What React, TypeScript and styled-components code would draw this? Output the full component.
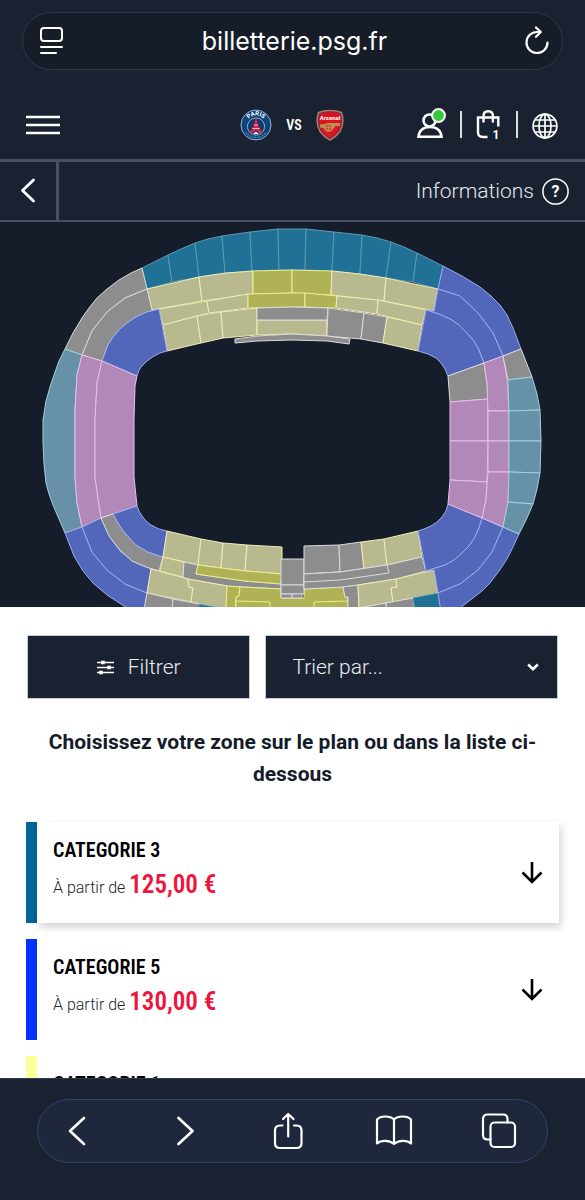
import React from "react";
import styled, { createGlobalStyle } from "styled-components";

const GlobalStyle = createGlobalStyle`
  *, *::before, *::after { box-sizing: border-box; }
  body {
    margin: 0;
    background: #1a2232;
    font-family: Roboto, "Liberation Sans", sans-serif;
  }
  h1, h2, p, ul { margin: 0; padding: 0; }
  button, select { font-family: inherit; }
`;

const navy = "#1a2232";
const rule = "#49505f";
const condensed = `"Roboto Condensed", Roboto, sans-serif`;

const Screen = styled.div`
  display: flex;
  flex-direction: column;
  height: 100vh;
  overflow: hidden;
  background: ${navy};
`;

const AddressArea = styled.header`
  flex: none;
  padding: 12px 22px 20px;
`;

const AddressBar = styled.div`
  display: flex;
  align-items: center;
  justify-content: space-between;
  height: 58px;
  padding: 0 12px 0 16px;
  border: 1px solid #2c384c;
  border-radius: 29px;
  background: #161c28;
`;

const AddressText = styled.span`
  color: #fff;
  font-family: Inter, "Liberation Sans", sans-serif;
  font-size: 25px;
  line-height: 30px;
`;

const IconButton = styled.button`
  display: flex;
  flex: none;
  align-items: center;
  justify-content: center;
  padding: 0;
  border: 0;
  background: none;
  color: #fff;
  cursor: pointer;

  svg { display: block; }
`;

const SiteNav = styled.nav`
  display: grid;
  flex: none;
  grid-template-columns: 1fr auto 1fr;
  align-items: center;
  height: 69px;
  padding: 0 27px 0 26px;
`;

const MenuSlot = styled.div`
  display: flex;
`;

const Match = styled.div`
  display: flex;
  align-items: center;
  gap: 14px;
  color: #fff;

  svg { display: block; }
`;

const Versus = styled.span`
  font-family: ${condensed};
  font-size: 14px;
  font-weight: 600;
  line-height: 16px;
`;

const Tools = styled.div`
  display: flex;
  align-items: center;
  justify-content: flex-end;
  gap: 14px;
`;

const Separator = styled.span`
  width: 2px;
  height: 27px;
  background: #d9dce2;
`;

const SubBar = styled.div`
  display: flex;
  flex: none;
  align-items: stretch;
  justify-content: space-between;
  height: 63px;
  border-top: 3px solid ${rule};
  border-bottom: 2px solid ${rule};
`;

const BackButton = styled(IconButton)`
  width: 59px;
  border-right: 3px solid ${rule};
`;

const InfoLink = styled.a`
  display: flex;
  align-items: center;
  gap: 8px;
  padding-right: 16px;
  color: #e3e6ec;
  font-size: 21px;
  font-weight: 300;
  line-height: 28px;
  text-decoration: none;
`;

const Content = styled.main`
  flex: 1;
  min-height: 0;
  overflow: hidden;
  background: #fff;
`;

const StadiumMap = styled.svg`
  display: block;
  width: 100%;
  background: #151d2b;
`;

const Controls = styled.div`
  display: grid;
  grid-template-columns: 223fr 292fr;
  gap: 15px;
  padding: 28px 27px 0;
`;

const FilterButton = styled.button`
  display: flex;
  align-items: center;
  justify-content: center;
  gap: 14px;
  height: 64px;
  border: 1px solid #c9cbdd;
  background: ${navy};
  color: #e9ebf0;
  font-size: 21px;
  font-weight: 300;
  cursor: pointer;
`;

const SortBox = styled.div`
  position: relative;
  height: 64px;
  border: 1px solid #c9cbdd;
  background: ${navy};

  svg {
    position: absolute;
    top: 27px;
    right: 18px;
    pointer-events: none;
  }
`;

const SortSelect = styled.select`
  width: 100%;
  height: 100%;
  padding: 0 26px;
  border: 0;
  appearance: none;
  background: transparent;
  color: #e9ebf0;
  font-size: 21px;
  font-weight: 300;
`;

const Prompt = styled.h1`
  padding: 27px 27px 32px;
  color: #141c2a;
  font-size: 21px;
  font-weight: 700;
  line-height: 32px;
  text-align: center;
`;

const CategoryList = styled.ul`
  display: flex;
  flex-direction: column;
  gap: 16px;
  padding: 0 26px;
  list-style: none;
`;

const CategoryCard = styled.li<{ $color: string }>`
  display: flex;
  height: 101px;
  border-left: 11px solid ${(p) => p.$color};
`;

const CardButton = styled.button<{ $raised?: boolean }>`
  display: flex;
  flex: 1;
  align-items: center;
  justify-content: space-between;
  padding: 0 16px;
  border: 0;
  background: #fff;
  box-shadow: ${(p) => (p.$raised ? "2px 4px 8px rgba(0, 0, 0, 0.18)" : "none")};
  color: #000;
  text-align: left;
  cursor: pointer;
`;

const CardText = styled.span`
  display: flex;
  flex-direction: column;
  height: 72px;
`;

const CategoryName = styled.span`
  font-family: ${condensed};
  font-size: 20px;
  font-weight: 600;
  line-height: 26px;
`;

const PriceLine = styled.span`
  color: #20242c;
  font-size: 16px;
  font-weight: 300;
  line-height: 44px;
`;

const Price = styled.strong`
  color: #f0143c;
  font-family: ${condensed};
  font-size: 25px;
  font-weight: 600;
`;

const BrowserFooter = styled.footer`
  flex: none;
  padding: 20px 37px 37px;
  border-top: 1px solid #333b4c;
`;

const BrowserTools = styled.div`
  display: flex;
  align-items: center;
  justify-content: space-between;
  height: 64px;
  padding: 0 26px 0 17px;
  border: 1px solid #304468;
  border-radius: 32px;
  background: #1e273b;
`;

const ToolButton = styled(IconButton)`
  width: 44px;
  height: 44px;
`;

const tones = {
  teal: { fill: "#217096", stroke: "#5c9ab5" },
  haze: { fill: "#6791a6", stroke: "#a3cfe0" },
  sand: { fill: "#b9b990", stroke: "#f0f0b4" },
  lime: { fill: "#b0b355", stroke: "#eef08c" },
  grey: { fill: "#8d8d8d", stroke: "#dcdcdc" },
  blue: { fill: "#5367ba", stroke: "#9dacee" },
  pink: { fill: "#b288b8", stroke: "#e8bfee" },
};

type Tone = keyof typeof tones;

const sections: [Tone, string][] = [
  ["teal", "142 268 168 255 172 282 147 289"],
  ["teal", "168 255 181 249 195 243 199 277 172 282"],
  ["teal", "195 243 208 239 222 236 225 273 199 277"],
  ["teal", "222 236 250 232 252 271 225 273"],
  ["teal", "250 232 278 229 279 270 252 271"],
  ["teal", "278 229 292 229 306 229 305 270 279 270"],
  ["teal", "306 229 334 232 332 271 305 270"],
  ["teal", "334 232 362 235 360 274 332 271"],
  ["teal", "362 235 377 238 391 242 386 278 360 274"],
  ["teal", "391 242 404 247 417 253 413 282 386 278"],
  ["teal", "417 253 443 266 438 289 413 282"],
  ["sand", "147 289 199 277 202 301 152 310"],
  ["sand", "199 277 226 273 253 271 253 294 202 301"],
  ["lime", "253 271 292 270 292 293 253 294"],
  ["lime", "292 270 332 271 331 295 292 293"],
  ["sand", "332 271 360 274 386 278 384 301 331 295"],
  ["sand", "386 278 438 289 434 311 384 301"],
  ["sand", "159 309 207 301 209 313 163 325"],
  ["sand", "207 301 248 294 248 308 209 313"],
  ["lime", "248 294 292 293 305 293 305 307 248 308"],
  ["lime", "305 293 337 296 336 308 305 307"],
  ["sand", "337 296 378 300 377 314 336 308"],
  ["sand", "378 300 426 310 422 325 377 314"],
  ["sand", "163 325 197 316 201 343 167 351"],
  ["sand", "197 316 221 312 223 338 201 343"],
  ["sand", "221 312 257 308 257 335 223 338"],
  ["sand", "257 320 327 320 327 336 292 334 257 335"],
  ["grey", "257 308 292 307 328 308 327 320 257 320"],
  ["grey", "328 308 364 313 361 339 327 336"],
  ["grey", "364 313 387 317 383 343 361 339"],
  ["sand", "387 317 422 325 418 351 383 343"],
  ["grey", "235 339 257 336 292 334 327 336 350 339 349 344 327 341 292 340 257 341 235 343"],
  ["grey", "142 268 131 273 119 280 107 289 97 298 89 308 82 318 73 333 65 349 82 355 92 331 107 312 125 298 147 289"],
  ["grey", "147 289 152 310 159 309 147 312 136 317 127 323 120 329 113 337 108 345 102 361 82 355 92 331 107 312 125 298"],
  ["blue", "159 309 167 351 160 353 154 356 147 361 142 366 139 370 137 376 102 361 108 345 113 337 120 329 127 323 136 317 147 312"],
  ["haze", "65 349 59 361 54 375 50 387 46 401 43 420 43 443 44 464 46 483 49 494 53 505 65 533 82 527 77 503 75 477 75 410 77 375 82 355"],
  ["pink", "82 355 102 361 97 383 95 420 95 477 98 498 101 518 82 527 77 503 75 477 75 410 77 375"],
  ["pink", "102 361 137 376 135 386 134 420 134 477 137 506 101 518 98 498 95 477 95 420 97 383"],
  ["blue", "65 533 82 527 92 552 107 570 125 584 147 593 144 612 132 612 121 604 107 595 93 583 83 571 74 556"],
  ["blue", "82 527 101 518 110 537 121 552 134 562 151 569 147 593 125 584 107 570 92 552"],
  ["grey", "101 518 113 514 118 523 124 532 136 545 148 552 163 557 159 571 146 567 132 561 119 549 109 536"],
  ["blue", "113 514 137 506 139 511 142 516 146 521 151 525 159 529 167 531 163 557 148 552 136 545 124 532 118 523"],
  ["sand", "167 531 201 539 198 565 163 557"],
  ["sand", "201 539 223 543 221 568 198 565"],
  ["sand", "223 543 247 545 245 571 221 568"],
  ["sand", "247 545 282 547 282 574 245 571"],
  ["sand", "163 557 184 562 183 577 160 571"],
  ["grey", "184 562 198 565 196 574 245 581 281 584 281 589 227 586 188 579 183 577"],
  ["lime", "198 565 245 571 282 574 281 584 245 581 196 574"],
  ["sand", "151 569 188 579 189 587 193 588 191 602 147 593"],
  ["sand", "188 579 227 586 226 610 191 602 193 588 189 587"],
  ["grey", "147 593 173 599 172 610 144 610"],
  ["grey", "173 599 226 609 226 612 172 610"],
  ["teal", "199 604 220 608 199 612"],
  ["lime", "227 586 240 587 239 596 236 597 236 610 226 610"],
  ["lime", "240 587 281 589 281 598 304 598 304 589 343 587 345 597 348 597 348 610 236 610 236 597 239 596"],
  ["lime", "236 601 270 602 270 610 236 610"],
  ["lime", "314 602 348 601 348 610 314 610"],
  ["grey", "281 559 304 559 304 585 281 585"],
  ["grey", "281 585 304 585 304 594 281 594"],
  ["grey", "281 594 292 594 292 598 281 598"],
  ["grey", "292 594 302 594 302 598 292 598"],
  ["grey", "304 546 339 545 340 572 304 574"],
  ["grey", "339 545 361 542 364 569 340 572"],
  ["sand", "361 542 384 539 387 565 364 569"],
  ["sand", "384 539 418 531 422 557 387 565"],
  ["grey", "304 574 340 572 387 565 422 557 426 571 396 579 358 585 343 587 304 589"],
  ["grey", "304 574 340 572 387 565 389 573 340 580 304 582"],
  ["grey", "343 587 358 585 359 610 348 610 348 597 345 597"],
  ["sand", "358 585 396 579 397 587 391 588 393 602 359 608"],
  ["sand", "396 579 434 570 438 593 393 602 391 588 397 587"],
  ["grey", "359 608 386 603 387 612 359 612"],
  ["grey", "386 603 413 598 415 610 387 612"],
  ["teal", "413 598 438 593 441 610 415 610"],
  ["blue", "418 531 424 529 431 526 437 522 442 517 446 511 448 504 482 518 479 528 475 537 469 546 462 553 454 560 445 565 426 571"],
  ["blue", "482 518 503 527 492 552 478 570 460 584 438 593 434 570 426 571 445 565 454 560 462 553 469 546 475 537 479 528"],
  ["blue", "503 527 519 534 513 547 507 559 499 571 490 583 482 591 473 598 455 612 441 612 438 593 460 584 478 570 492 552"],
  ["blue", "443 266 462 276 480 287 491 296 500 305 507 315 513 328 521 349 503 356 493 333 478 313 460 296 438 289"],
  ["blue", "438 289 460 296 478 313 493 333 503 356 484 363 478 348 473 340 466 332 459 325 450 319 439 314 426 310 434 311"],
  ["blue", "426 310 439 314 450 319 459 325 466 332 473 340 478 348 484 363 448 376 445 369 441 363 436 358 428 354 418 351"],
  ["grey", "448 376 484 363 487 383 488 399 450 402"],
  ["pink", "450 402 488 399 488 441 450 441"],
  ["pink", "450 441 488 441 487 482 450 480"],
  ["pink", "450 480 487 482 486 500 482 518 448 504"],
  ["pink", "484 363 503 356 507 378 509 411 488 411 487 383"],
  ["pink", "488 411 509 411 509 441 488 441"],
  ["pink", "488 441 509 441 509 472 488 472"],
  ["pink", "488 472 509 472 508 502 503 527 482 518 486 500"],
  ["grey", "503 356 521 349 532 377 508 380"],
  ["haze", "508 380 532 377 537 394 540 410 509 411"],
  ["haze", "509 411 540 410 541 441 509 441"],
  ["haze", "509 441 541 441 540 473 509 472"],
  ["haze", "509 472 540 473 537 489 533 504 508 502"],
  ["haze", "508 502 533 504 527 518 519 534 503 527"],
];

const categories: { name: string; price: string; color: string; raised?: boolean }[] = [
  { name: "CATEGORIE 3", price: "125,00 €", color: "#006699", raised: true },
  { name: "CATEGORIE 5", price: "130,00 €", color: "#0033ff" },
  { name: "CATEGORIE 1", price: "150,00 €", color: "#ffff99" },
];

const strokeProps = {
  fill: "none",
  stroke: "#fff",
  strokeLinecap: "round" as const,
  strokeLinejoin: "round" as const,
};

const ReaderIcon = () => (
  <svg width="26" height="30" viewBox="0 0 26 30" {...strokeProps} strokeWidth="2">
    <rect x="2" y="2" width="21" height="13" rx="3" />
    <path d="M2 21h21M2 27h15" />
  </svg>
);

const ReloadIcon = () => (
  <svg width="26" height="30" viewBox="0 0 26 30" {...strokeProps} strokeWidth="2.2">
    <path d="M15.500 6H13A10.500 10.500 0 1 0 23.500 16.500M12 1.500L16.800 6 12 10.800" />
  </svg>
);

const MenuIcon = () => (
  <svg width="34" height="20" viewBox="0 0 34 20" fill="none" stroke="#fff" strokeWidth="2.600">
    <path d="M0 2h34M0 10h34M0 18h34" />
  </svg>
);

const ParisBadge = () => (
  <svg width="32" height="32" viewBox="0 0 32 32" role="img" aria-label="Paris Saint-Germain">
    <defs>
      <path id="badge-arc" d="M6 16.500A10 10 0 0 1 26 16.500" />
    </defs>
    <circle cx="16" cy="16" r="15" fill="#0d4379" stroke="#8fb6d4" strokeWidth="1" />
    <circle cx="16" cy="17.500" r="8.600" fill="#123a70" stroke="#9dbdd6" strokeWidth="0.900" />
    <text fill="#fff" fontFamily="Roboto, sans-serif" fontSize="6" fontWeight="700" textAnchor="middle">
      <textPath href="#badge-arc" startOffset="50%">PARIS</textPath>
    </text>
    <path d="M15.300 9.500h1.400l.9 5.500 1.800 4 3.600 5h-4.200c-.4-3-5.200-3-5.600 0H9l3.600-5 1.800-4z" fill="#e0233c" />
    <path d="M12.500 19.500h7M14 16h4" stroke="#fff" strokeWidth="0.700" />
    <path d="M13.500 25a2.600 2.600 0 0 1 5 0z" fill="#e8eef5" />
    <path d="M6 23.500a12.500 12.500 0 0 0 20 0" fill="none" stroke="#4d86b6" strokeWidth="1.500" strokeDasharray="1.500 1" />
  </svg>
);

const ArsenalBadge = () => (
  <svg width="28" height="32" viewBox="0 0 28 32" role="img" aria-label="Arsenal">
    <path d="M2.500 3.500Q14-.5 25.500 3.500 29 14 24 22.500 20 28 14 31 8 28 4 22.500-1 14 2.500 3.500z" fill="#df1220" stroke="#a2866c" strokeWidth="1.400" />
    <path d="M3.700 4.600Q14 1 24.300 4.600 27.500 14 23 21.500 19.500 26.500 14 29.500 8.500 26.500 5 21.500.5 14 3.700 4.600z" fill="none" stroke="#27407a" strokeWidth="0.600" />
    <text x="14" y="11" fill="#fff" fontFamily="Roboto, sans-serif" fontSize="6" fontWeight="700" textAnchor="middle">Arsenal</text>
    <path d="M4 15.500l5-.5 3-1h12v3H19l-1 2.500h-7l-7-1z" fill="#b79257" />
    <circle cx="12.500" cy="18.500" r="3.800" fill="#c9542f" stroke="#b79257" strokeWidth="1.400" />
    <path d="M12.500 15v7M9 18.500h7" stroke="#b79257" strokeWidth="0.800" />
  </svg>
);

const UserIcon = () => (
  <svg width="30" height="34" viewBox="0 0 30 34" fill="none" stroke="#fff" strokeWidth="2.600">
    <path d="M2.500 28.700C3 22.500 7.500 19 14 19S25 22.500 25.500 28.700z" />
    <circle cx="13.500" cy="12.500" r="6" fill="#1a2232" />
    <circle cx="22.500" cy="7.500" r="6.400" fill="#35c935" strokeWidth="2" />
  </svg>
);

const BagIcon = () => (
  <svg width="26" height="34" viewBox="0 0 26 34" fill="none" stroke="#fff" strokeWidth="2.400">
    <path d="M11.500 29H7Q2 29 2 24.500V9.500h20.300v9" />
    <path d="M7.500 14.500V8Q7.500 3.200 12.200 3.200T16.900 8v6.500" />
    <text x="20" y="31" fill="#fff" stroke="none" fontFamily="Roboto, sans-serif" fontSize="12" fontWeight="700" textAnchor="middle">1</text>
  </svg>
);

const GlobeIcon = () => (
  <svg width="26" height="28" viewBox="0 0 26 28" fill="none" stroke="#fff" strokeWidth="1.700">
    <circle cx="13" cy="15" r="11.900" />
    <ellipse cx="13" cy="15" rx="6" ry="11.900" />
    <path d="M13 3v24M1.200 15h23.600M3 9h20M3 21h20" />
  </svg>
);

const HelpIcon = () => (
  <svg width="27" height="27" viewBox="0 0 27 27" fill="none" stroke="#fff" strokeWidth="1.500">
    <circle cx="13.500" cy="13.500" r="12.600" />
    <text x="13.500" y="19" fill="#fff" stroke="none" fontFamily="Roboto, sans-serif" fontSize="16" fontWeight="700" textAnchor="middle">?</text>
  </svg>
);

const Chevron = ({ right = false }: { right?: boolean }) => (
  <svg width="22" height="32" viewBox="0 0 22 32" {...strokeProps} strokeWidth="2.600">
    <path d={right ? "M6.500 3L20.500 16 6.500 29" : "M18 3L4 16 18 29"} />
  </svg>
);

const BackIcon = () => (
  <svg width="16" height="26" viewBox="0 0 16 26" {...strokeProps} strokeWidth="2.800">
    <path d="M13.500 2L2.500 12.500l11 10.500" />
  </svg>
);

const SlidersIcon = () => (
  <svg width="17" height="15" viewBox="0 0 17 15" fill="#fff" stroke="#fff" strokeWidth="1.600">
    <path d="M0 2.500h17M0 7.500h17M0 12.500h17" />
    <rect x="5" y="1.500" width="2" height="2" />
    <rect x="11" y="6.500" width="2" height="2" />
    <rect x="3" y="11.500" width="2" height="2" />
  </svg>
);

const CaretIcon = () => (
  <svg width="12" height="9" viewBox="0 0 12 9" fill="none" stroke="#fff" strokeWidth="2.600">
    <path d="M1.200 1.500L6 6.200l4.800-4.700" />
  </svg>
);

const ArrowDownIcon = () => (
  <svg width="22" height="24" viewBox="0 0 22 24" fill="none" stroke="#000" strokeWidth="2.600">
    <path d="M11 1v20M1.500 11.500L11 21 20.500 11.500" />
  </svg>
);

const ShareIcon = () => (
  <svg width="32" height="38" viewBox="0 0 32 38" {...strokeProps} strokeWidth="2.200">
    <path d="M10.500 13.500H8Q3 13.500 3 18.500V31q0 5 5 5h16.500q5 0 5-5V18.500q0-5-5-5H22M16.200 24.500V2.500M11 7l5.200-5L21.500 7" />
  </svg>
);

const BookIcon = () => (
  <svg width="38" height="32" viewBox="0 0 38 32" {...strokeProps} strokeWidth="2.200">
    <path d="M19 4.500C15 .5 5.500.5 2 4.500V28.500c4-3.500 12.500-3.500 17 .5 4.500-4 13-4 17-.5V4.500C32.500.5 23 .5 19 4.500zV29" />
  </svg>
);

const TabsIcon = () => (
  <svg width="36" height="36" viewBox="0 0 36 36" {...strokeProps} strokeWidth="2.200">
    <rect x="9.500" y="9.500" width="24.500" height="24.500" rx="4" />
    <path d="M9.500 26.500H6.500Q2 26.500 2 22V6q0-4.500 4.500-4.500h15.500q4.500 0 4.500 4.500v3.500" />
  </svg>
);

export default function App() {
  return (
    <Screen>
      <GlobalStyle />
      <AddressArea>
        <AddressBar>
          <IconButton aria-label="Affichage du lecteur"><ReaderIcon /></IconButton>
          <AddressText>billetterie.psg.fr</AddressText>
          <IconButton aria-label="Recharger"><ReloadIcon /></IconButton>
        </AddressBar>
      </AddressArea>

      <SiteNav>
        <MenuSlot>
          <IconButton aria-label="Menu"><MenuIcon /></IconButton>
        </MenuSlot>
        <Match>
          <ParisBadge />
          <Versus>VS</Versus>
          <ArsenalBadge />
        </Match>
        <Tools>
          <IconButton aria-label="Mon compte"><UserIcon /></IconButton>
          <Separator />
          <IconButton aria-label="Panier"><BagIcon /></IconButton>
          <Separator />
          <IconButton aria-label="Langue"><GlobeIcon /></IconButton>
        </Tools>
      </SiteNav>

      <SubBar>
        <BackButton aria-label="Retour"><BackIcon /></BackButton>
        <InfoLink href="#informations">
          Informations
          <HelpIcon />
        </InfoLink>
      </SubBar>

      <Content>
        <StadiumMap viewBox="0 222 585 385" role="img" aria-label="Plan du stade">
          {sections.map(([tone, points]) => (
            <polygon
              key={points}
              points={points}
              fill={tones[tone].fill}
              stroke={tones[tone].stroke}
              strokeWidth="1"
              strokeLinejoin="round"
            />
          ))}
        </StadiumMap>

        <Controls>
          <FilterButton>
            <SlidersIcon />
            Filtrer
          </FilterButton>
          <SortBox>
            <SortSelect aria-label="Trier par" defaultValue="">
              <option value="">Trier par...</option>
              <option value="asc">Prix croissant</option>
              <option value="desc">Prix décroissant</option>
            </SortSelect>
            <CaretIcon />
          </SortBox>
        </Controls>

        <Prompt>Choisissez votre zone sur le plan ou dans la liste ci-dessous</Prompt>

        <CategoryList>
          {categories.map((c) => (
            <CategoryCard key={c.name} $color={c.color}>
              <CardButton $raised={c.raised}>
                <CardText>
                  <CategoryName>{c.name}</CategoryName>
                  <PriceLine>
                    À partir de <Price>{c.price}</Price>
                  </PriceLine>
                </CardText>
                <ArrowDownIcon />
              </CardButton>
            </CategoryCard>
          ))}
        </CategoryList>
      </Content>

      <BrowserFooter>
        <BrowserTools>
          <ToolButton aria-label="Page précédente"><Chevron /></ToolButton>
          <ToolButton aria-label="Page suivante"><Chevron right /></ToolButton>
          <ToolButton aria-label="Partager"><ShareIcon /></ToolButton>
          <ToolButton aria-label="Signets"><BookIcon /></ToolButton>
          <ToolButton aria-label="Onglets"><TabsIcon /></ToolButton>
        </BrowserTools>
      </BrowserFooter>
    </Screen>
  );
}
